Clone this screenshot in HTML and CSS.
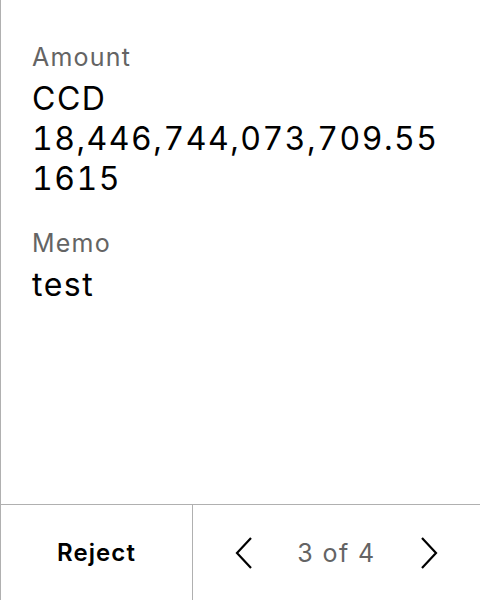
FILE: index.html
```html
<!DOCTYPE html>
<html>
<head>
<meta charset="utf-8">
<link rel="stylesheet" href="styles.css">
</head>
<body>
<div class="screen">
  <main class="content">
    <section class="field">
      <div class="label">Amount</div>
      <div class="value">CCD<br>18,446,744,073,709.55<wbr>1615</div>
    </section>
    <section class="field">
      <div class="label">Memo</div>
      <div class="value">test</div>
    </section>
  </main>
  <footer class="footer">
    <button class="reject">Reject</button>
    <div class="pager">
      <svg class="chev" width="18" height="32" viewBox="0 0 18 32"><path d="M16 1 L2 16 L16 31" fill="none" stroke="#000" stroke-width="2.2"/></svg>
      <span class="count">3 of 4</span>
      <svg class="chev" width="18" height="32" viewBox="0 0 18 32"><path d="M2 1 L16 16 L2 31" fill="none" stroke="#000" stroke-width="2.2"/></svg>
    </div>
  </footer>
</div>
</body>
</html>
```

FILE: styles.css
```css
* { box-sizing: border-box; }
html, body { margin: 0; padding: 0; background: #fff; }
body { font-family: Inter, "Noto Sans", sans-serif; color: #000; }
.screen {
  width: 480px;
  height: 600px;
  border-left: 1px solid #b0b0b0;
  display: flex;
  flex-direction: column;
}
.content {
  flex: 1;
  padding: 40px 28px 0 31px;
  display: flex;
  flex-direction: column;
  gap: 27px;
}
.field {
  display: flex;
  flex-direction: column;
  gap: 5px;
}
.label {
  font-size: 25px;
  line-height: 34px;
  letter-spacing: 1.2px;
  color: #646464;
}
.value {
  font-size: 32px;
  line-height: 40px;
  letter-spacing: 1.5px;
  font-variant-numeric: tabular-nums;
  overflow-wrap: anywhere;
}
.footer {
  height: 96px;
  border-top: 1px solid #b0b0b0;
  display: flex;
}
.reject {
  width: 192px;
  border: none;
  border-right: 1px solid #b0b0b0;
  background: #fff;
  font-family: inherit;
  font-size: 24px;
  font-weight: 600;
  letter-spacing: 1.1px;
  color: #000;
  padding: 0;
}
.pager {
  flex: 1;
  display: flex;
  align-items: center;
  justify-content: space-between;
  padding: 0 42px 0 42px;
}
.count {
  font-size: 25px;
  letter-spacing: 1.4px;
  color: #646464;
}
.chev { display: block; }
```
